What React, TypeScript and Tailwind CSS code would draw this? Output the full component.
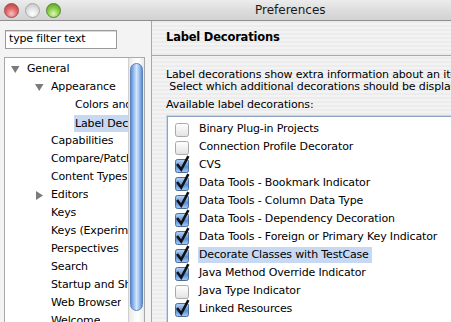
import React from "react";

type TreeRow = { label: string; indent: 0 | 1 | 2; arrow?: "down" | "right"; selected?: boolean };

const tree: TreeRow[] = [
  { label: "General", indent: 0, arrow: "down" },
  { label: "Appearance", indent: 1, arrow: "down" },
  { label: "Colors and Fonts", indent: 2 },
  { label: "Label Decorations", indent: 2, selected: true },
  { label: "Capabilities", indent: 1 },
  { label: "Compare/Patch", indent: 1 },
  { label: "Content Types", indent: 1 },
  { label: "Editors", indent: 1, arrow: "right" },
  { label: "Keys", indent: 1 },
  { label: "Keys (Experimental)", indent: 1 },
  { label: "Perspectives", indent: 1 },
  { label: "Search", indent: 1 },
  { label: "Startup and Shutdown", indent: 1 },
  { label: "Web Browser", indent: 1 },
  { label: "Welcome", indent: 1 },
];

type Item = { label: string; checked: boolean; selected?: boolean };
const items: Item[] = [
  { label: "Binary Plug-in Projects", checked: false },
  { label: "Connection Profile Decorator", checked: false },
  { label: "CVS", checked: true },
  { label: "Data Tools - Bookmark Indicator", checked: true },
  { label: "Data Tools - Column Data Type", checked: true },
  { label: "Data Tools - Dependency Decoration", checked: true },
  { label: "Data Tools - Foreign or Primary Key Indicator", checked: true },
  { label: "Decorate Classes with TestCase", checked: true, selected: true },
  { label: "Java Method Override Indicator", checked: true },
  { label: "Java Type Indicator", checked: false },
  { label: "Linked Resources", checked: true },
];

const indentClass = ["w-0", "w-[24px]", "w-[48px]"];

function Arrow({ dir }: { dir: "down" | "right" }) {
  return (
    <svg width="9" height="9" viewBox="0 0 9 9">
      {dir === "down" ? (
        <polygon points="0,1 8.5,1 4.25,8" fill="#7b7b7b" />
      ) : (
        <polygon points="1,0 8,4.5 1,9" fill="#7b7b7b" />
      )}
    </svg>
  );
}

function Checkbox({ checked }: { checked: boolean }) {
  return (
    <svg width="16" height="16" viewBox="0 0 16 16" className="overflow-visible">
      <defs>
        <linearGradient id="cbOff" x1="0" y1="0" x2="0" y2="1">
          <stop offset="0" stopColor="#ffffff" />
          <stop offset="0.5" stopColor="#f1f1f1" />
          <stop offset="1" stopColor="#e2e2e2" />
        </linearGradient>
        <linearGradient id="cbOn" x1="0" y1="0" x2="0" y2="1">
          <stop offset="0" stopColor="#b9d4f4" />
          <stop offset="0.45" stopColor="#6f9fdf" />
          <stop offset="0.55" stopColor="#5b8dd6" />
          <stop offset="1" stopColor="#a9cdf3" />
        </linearGradient>
      </defs>
      <rect
        x="0.5"
        y="2.5"
        width="13"
        height="13"
        rx="2"
        fill={checked ? "url(#cbOn)" : "url(#cbOff)"}
        stroke={checked ? "#4a6d9c" : "#a9a9a9"}
      />
      {checked && (
        <path d="M2.8 8 L6.2 12.6 L12.8 0.2" fill="none" stroke="#111" strokeWidth="2.5" strokeLinecap="square" strokeLinejoin="miter" />
      )}
    </svg>
  );
}

export default function App() {
  return (
    <div
      className="w-[451px] h-[322px] overflow-hidden flex flex-col text-black text-[11px] tracking-[-0.15px] bg-[#eeeeee]"
      style={{ fontFamily: '"DejaVu Sans", "Liberation Sans", sans-serif' }}
    >
      {/* title bar */}
      <div className="h-[21px] shrink-0 flex items-center border-b border-[#8e8e8e] bg-[linear-gradient(180deg,#ececec_0%,#dcdcdc_55%,#d2d2d2_100%)]">
        <div className="flex items-center gap-[6px] pl-[4px]">
          <span className="w-[15px] h-[15px] rounded-full border border-[#9c4a4a] bg-[radial-gradient(circle_at_50%_75%,#f9c2c2_0%,#e06b6b_45%,#b83a3a_100%)]" />
          <span className="w-[15px] h-[15px] rounded-full border border-[#a8a8a8] bg-[radial-gradient(circle_at_50%_75%,#ffffff_0%,#e4e4e4_45%,#bdbdbd_100%)]" />
          <span className="w-[15px] h-[15px] rounded-full border border-[#4f8a2a] bg-[radial-gradient(circle_at_50%_75%,#dff7b8_0%,#8fcf4e_45%,#4e9a1f_100%)]" />
        </div>
        <div className="ml-[194px] text-[12px] tracking-normal text-[#1a1a1a]">Preferences</div>
      </div>

      {/* body */}
      <div className="flex flex-1 min-h-0">
        {/* left pane */}
        <div className="w-[152px] shrink-0 border-r border-[#a8a8a8] bg-[#f3f3f3] flex flex-col">
          <div className="mt-[9px] ml-[5px] w-[112px] h-[19px] border border-[#9a9a9a] bg-white flex items-center pl-[3px] shadow-[inset_0_1px_0_#d8d8d8]">
            <span className="whitespace-nowrap">type filter text</span>
          </div>
          <div className="mt-[8px] ml-[4px] w-[141px] flex-1 border border-[#a9a9a9] border-b-0 bg-white flex overflow-hidden">
            <div className="flex-1 min-w-0 pt-[2px] overflow-hidden">
              {tree.map((r) => (
                <div key={r.label} className="h-[18px] flex items-center whitespace-nowrap">
                  <div className={`${indentClass[r.indent]} shrink-0`} />
                  <div className="w-[22px] shrink-0 pl-[6px] flex items-center">
                    {r.arrow && <Arrow dir={r.arrow} />}
                  </div>
                  {r.selected ? (
                    <span className="flex-1 -ml-[1px] pl-[1px] h-[17px] leading-[17px] bg-[#c6d8f2] overflow-hidden">{r.label}</span>
                  ) : (
                    <span className="overflow-hidden">{r.label}</span>
                  )}
                </div>
              ))}
            </div>
            {/* scrollbar */}
            <div className="w-[16px] shrink-0 border-l border-[#cfcfcf] bg-[linear-gradient(90deg,#e9e9e9,#fafafa_40%,#ffffff_60%,#eaeaea)] px-[1px] pt-[5px]">
              <div className="h-[248px] rounded-full border border-[#5b82bd] bg-[linear-gradient(90deg,#5f8fd6_0%,#94bbee_25%,#d5e6fb_50%,#9cc2f1_75%,#5a8ad2_100%)]" />
            </div>
          </div>
        </div>

        {/* right pane */}
        <div className="flex-1 min-w-0 flex flex-col overflow-hidden bg-[repeating-linear-gradient(180deg,#ececec_0px,#ececec_2px,#f3f3f3_2px,#f3f3f3_4px)]">
          <div className="h-[35px] shrink-0 flex items-center pl-[14px] border-b border-[#a9a9a9]">
            <span className="font-bold text-[11.5px] tracking-[-0.2px] whitespace-nowrap">Label Decorations</span>
          </div>
          <div className="pl-[14px] pt-[13px] leading-[12px] whitespace-pre">
            <div>Label decorations show extra information about an item on its label or icon.</div>
            <div> Select which additional decorations should be displayed.</div>
            <div className="mt-[6px]">Available label decorations:</div>
          </div>
          <div className="mt-[5px] ml-[15px] w-[320px] flex-1 border border-[#8ea3c3] border-b-0 shadow-[0_0_0_1px_#c9d7ec] bg-white pt-[3px]">
            {items.map((it) => (
              <div key={it.label} className="h-[18px] flex items-center whitespace-nowrap">
                <div className="w-[31px] shrink-0 pl-[7px] flex items-center">
                  <Checkbox checked={it.checked} />
                </div>
                {it.selected ? (
                  <span className="-ml-[1px] pl-[1px] pr-[3px] h-[16px] leading-[16px] bg-[#c6d8f2]">{it.label}</span>
                ) : (
                  <span>{it.label}</span>
                )}
              </div>
            ))}
          </div>
        </div>
      </div>
    </div>
  );
}
